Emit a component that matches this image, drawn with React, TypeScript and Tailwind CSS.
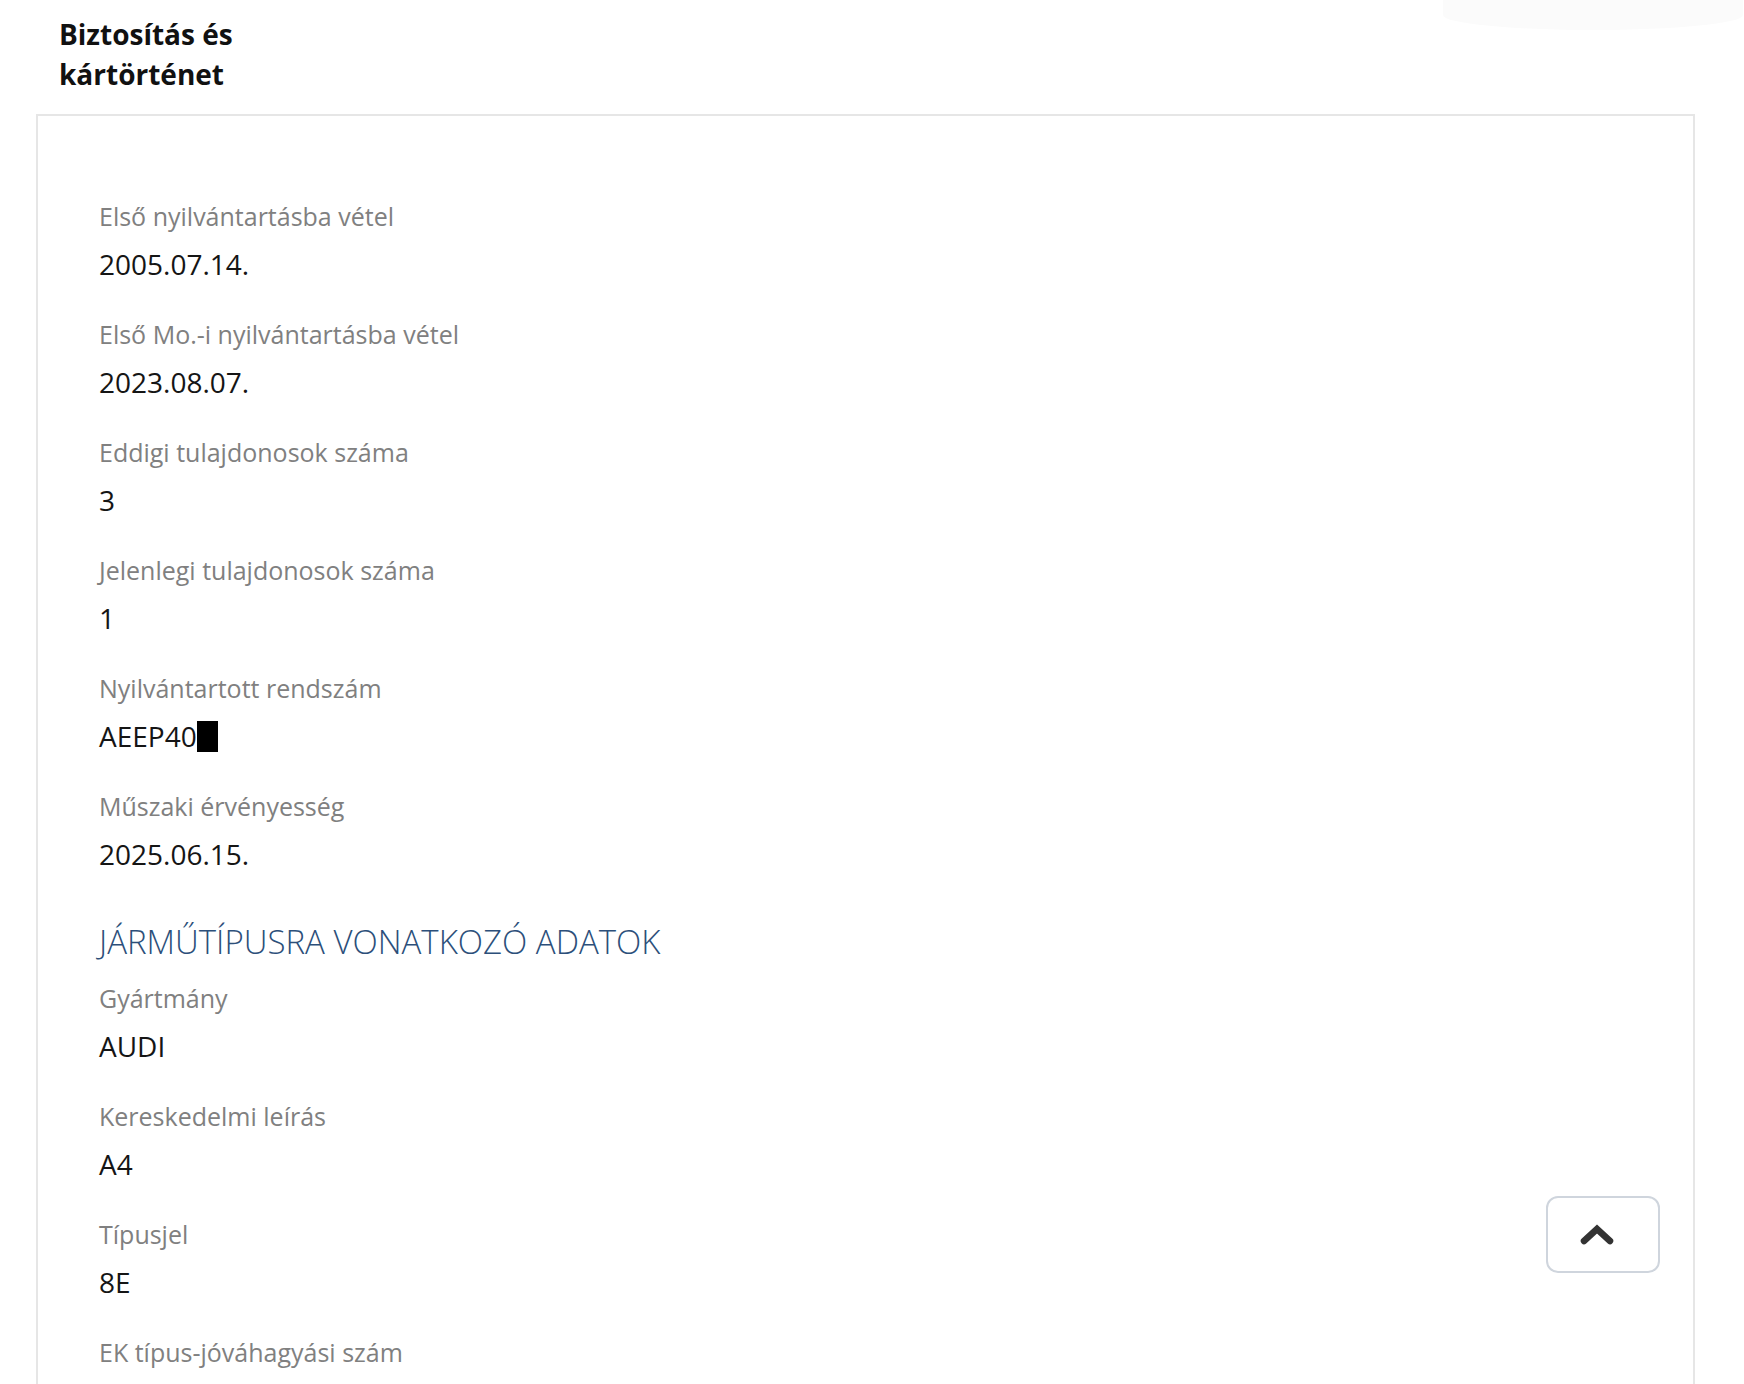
import React from "react";

const firstGroup = [
  { label: "Első nyilvántartásba vétel", value: "2005.07.14." },
  { label: "Első Mo.-i nyilvántartásba vétel", value: "2023.08.07." },
  { label: "Eddigi tulajdonosok száma", value: "3" },
  { label: "Jelenlegi tulajdonosok száma", value: "1" },
  { label: "Nyilvántartott rendszám", value: "AEEP40", masked: true },
  { label: "Műszaki érvényesség", value: "2025.06.15." },
];

const typeGroup = [
  { label: "Gyártmány", value: "AUDI" },
  { label: "Kereskedelmi leírás", value: "A4" },
  { label: "Típusjel", value: "8E" },
  { label: "EK típus-jóváhagyási szám", value: "" },
];

function Field({ label, value, masked }: { label: string; value: string; masked?: boolean }) {
  return (
    <div className="mb-[32px]">
      <div className="text-[25px] leading-[36px] text-[#808080]">{label}</div>
      {value && (
        <div className="mt-[10px] flex items-center text-[28px] leading-[40px] text-[#151515]">
          {value}
          {masked && <span className="inline-block h-[31px] w-[21px] bg-black" />}
        </div>
      )}
    </div>
  );
}

export default function App() {
  return (
    <div
      className="relative h-[1384px] overflow-hidden bg-white"
      style={{ fontFamily: '"Open Sans", "Noto Sans", sans-serif' }}
    >
      {/* faint sticky tab shadow at the top right */}
      <div className="absolute left-[1443px] top-0 h-[30px] w-[300px] rounded-b-[50%] bg-[#fbfbfb]" />

      {/* Header tab */}
      <div className="pl-[59px] pt-[14px]">
        <h2 className="w-[240px] text-[28px] font-bold leading-[40px] text-[#111]">
          Biztosítás és kártörténet
        </h2>
      </div>

      {/* Card */}
      <div className="ml-[36px] mt-[20px] w-[1659px] border-2 border-[#e6e6e6] pl-[61px] pt-[82px]">
        {firstGroup.map((f) => (
          <Field key={f.label} {...f} />
        ))}

        <h3 className="mt-[44px] mb-[14px] text-[33px] font-light leading-[48px] text-[#2c4f7a]">
          JÁRMŰTÍPUSRA VONATKOZÓ ADATOK
        </h3>

        {typeGroup.map((f) => (
          <Field key={f.label} {...f} />
        ))}
      </div>

      {/* Scroll to top */}
      <button className="absolute left-[1546px] top-[1196px] flex h-[77px] w-[114px] items-center rounded-[12px] border-2 border-[#cfd5dd] bg-white pl-[30px]">
        <svg width="38" height="24" viewBox="0 0 38 24" fill="none">
          <path d="M6 18 L19 6 L32 18" stroke="#333" strokeWidth="6.5" strokeLinecap="round" strokeLinejoin="miter" />
        </svg>
      </button>
    </div>
  );
}
